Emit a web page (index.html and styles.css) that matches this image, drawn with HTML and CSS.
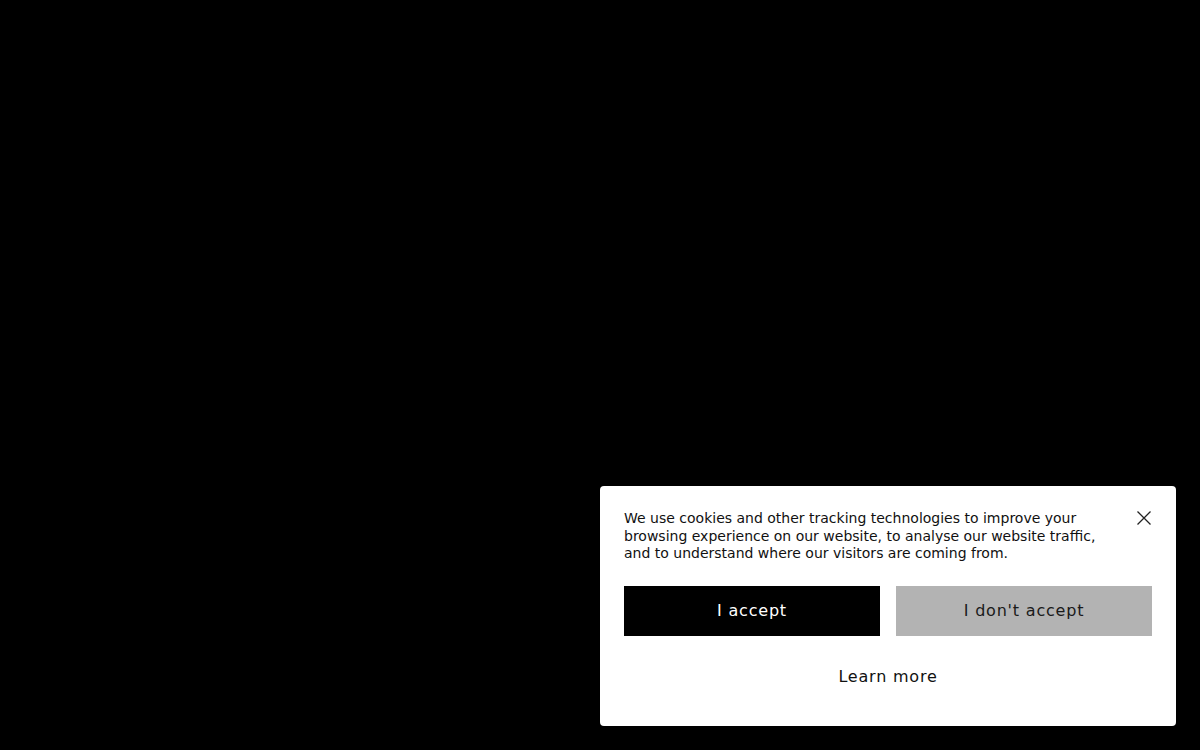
FILE: index.html
```html
<!DOCTYPE html>
<html lang="en">
<head>
<meta charset="utf-8">
<title>Cookies</title>
<link rel="stylesheet" href="styles.css">
</head>
<body>
<div class="page">
  <div class="banner">
    <div class="top">
      <p class="msg">We use cookies and other tracking technologies to improve your browsing experience on our website, to analyse our website traffic, and to understand where our visitors are coming from.</p>
      <button class="close" aria-label="Close">
        <svg width="16" height="16" viewBox="0 0 16 16"><path d="M1.5 1.5L14.5 14.5M14.5 1.5L1.5 14.5" stroke="#222" stroke-width="1.3" fill="none"/></svg>
      </button>
    </div>
    <div class="actions">
      <button class="btn accept">I accept</button>
      <button class="btn decline">I don't accept</button>
    </div>
    <div class="more"><a class="learn" href="#">Learn more</a></div>
  </div>
</div>
</body>
</html>
```
FILE: styles.css
```css
html, body {
  margin: 0;
  padding: 0;
  background: #000;
  height: 100%;
}
body {
  font-family: "DejaVu Sans", sans-serif;
}
.page {
  height: 750px;
  display: flex;
  align-items: flex-end;
  justify-content: flex-end;
  padding: 0 24px 24px 0;
  box-sizing: border-box;
}
.banner {
  width: 576px;
  height: 240px;
  box-sizing: border-box;
  background: #fff;
  border-radius: 4px;
  padding: 24px;
  display: flex;
  flex-direction: column;
}
.top {
  display: flex;
  justify-content: space-between;
  align-items: flex-start;
  height: 76px;
}
.msg {
  margin: 0;
  width: 480px;
  font-size: 14px;
  line-height: 17.5px;
  color: #111;
}
.close {
  background: none;
  border: none;
  padding: 0;
  width: 16px;
  height: 16px;
  cursor: pointer;
  display: flex;
}
.actions {
  display: flex;
  gap: 16px;
}
.btn {
  flex: 1;
  height: 50px;
  border: none;
  padding: 0 0 2px;
  font-family: "DejaVu Sans", sans-serif;
  font-size: 16px;
  letter-spacing: 0.8px;
  cursor: pointer;
}
.accept {
  background: #000;
  color: #fff;
}
.decline {
  background: #b3b3b3;
  color: #1a1a1a;
}
.more {
  display: flex;
  justify-content: center;
  margin-top: 31px;
}
.learn {
  font-size: 16px;
  letter-spacing: 0.8px;
  color: #111;
  text-decoration: none;
}
```
